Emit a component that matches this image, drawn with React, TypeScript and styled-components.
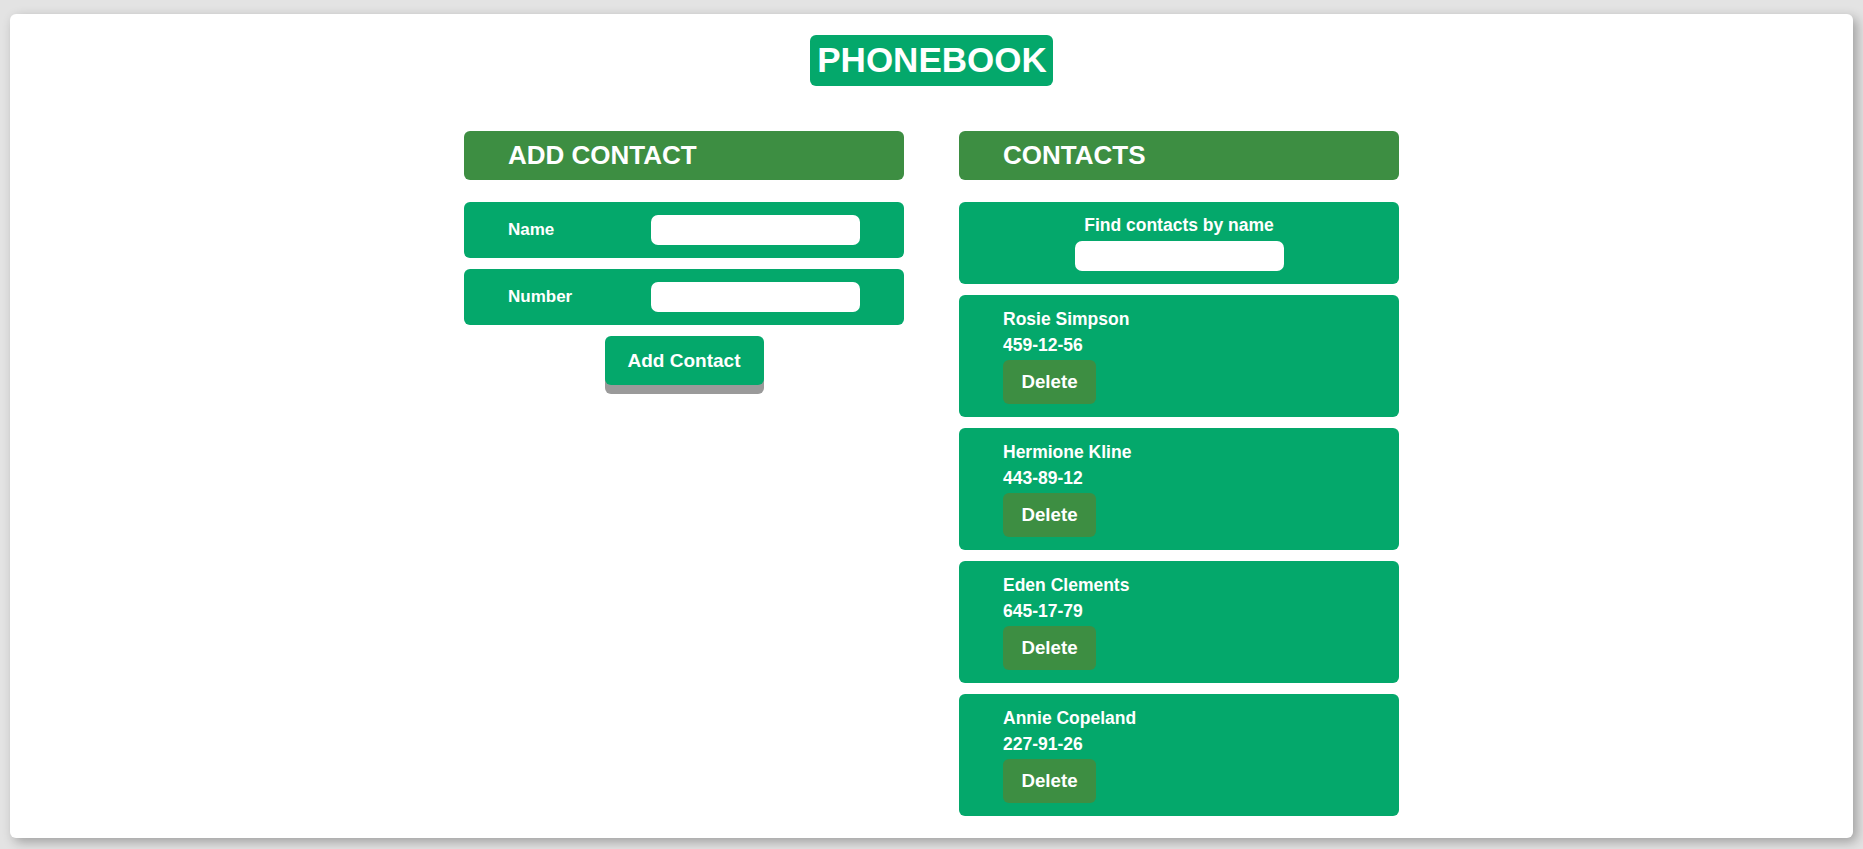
import React, { ReactElement } from "react";
import styled, { createGlobalStyle } from "styled-components";

interface Contact {
  id: string;
  name: string;
  number: string;
}

const contacts: Contact[] = [
  { id: "id-1", name: "Rosie Simpson", number: "459-12-56" },
  { id: "id-2", name: "Hermione Kline", number: "443-89-12" },
  { id: "id-3", name: "Eden Clements", number: "645-17-79" },
  { id: "id-4", name: "Annie Copeland", number: "227-91-26" },
];

const GREEN = "#04a86b";
const DARK_GREEN = "#3d8e42";

const GlobalStyle = createGlobalStyle`
  html, body {
    margin: 0;
    background-color: #e3e3e3;
    font-family: "Liberation Sans", Arial, sans-serif;
  }
  body {
    padding: 14px 10px 13px;
  }
  * {
    box-sizing: border-box;
  }
`;

const Page = styled.main`
  background-color: #fff;
  border-radius: 6px;
  box-shadow: 4px 4px 12px rgba(0, 0, 0, 0.3);
  padding: 21px 0 22px;
  display: flex;
  flex-direction: column;
  align-items: center;
`;

const Title = styled.h1`
  margin: 0 0 45px;
  padding: 5px 6px 6px 7px;
  font-size: 35px;
  line-height: 40px;
  font-weight: 700;
  color: #fff;
  background-color: ${GREEN};
  border-radius: 6px;
`;

const Columns = styled.div`
  display: grid;
  grid-template-columns: 440px 440px;
  column-gap: 55px;
  align-items: start;
`;

const Column = styled.section`
  display: flex;
  flex-direction: column;
  gap: 11px;
`;

const SectionTitle = styled.h2`
  margin: 0 0 11px;
  padding: 9px 44px 10px;
  font-size: 26px;
  line-height: 30px;
  font-weight: 700;
  color: #fff;
  background-color: ${DARK_GREEN};
  border-radius: 6px;
`;

const FieldRow = styled.label`
  display: flex;
  align-items: center;
  justify-content: space-between;
  padding: 13px 44px;
  background-color: ${GREEN};
  border-radius: 6px;
  color: #fff;
  font-size: 17px;
  font-weight: 700;
`;

const TextInput = styled.input`
  width: 209px;
  height: 30px;
  border: none;
  border-radius: 7px;
  background: #fff;
  outline: none;
  font: inherit;
`;

const SubmitButton = styled.button`
  align-self: center;
  width: 159px;
  height: 49px;
  border: none;
  border-radius: 6px;
  background-color: ${GREEN};
  box-shadow: 0 9px 0 #9a9a9a;
  color: #fff;
  font-family: inherit;
  font-size: 19px;
  font-weight: 700;
  cursor: pointer;
`;

const FilterBox = styled.label`
  display: flex;
  flex-direction: column;
  align-items: center;
  gap: 6px;
  padding: 13px 0;
  background-color: ${GREEN};
  border-radius: 6px;
  color: #fff;
  font-size: 17.5px;
  line-height: 20px;
  font-weight: 700;
`;

const ContactList = styled.ul`
  margin: 0;
  padding: 0;
  list-style: none;
  display: flex;
  flex-direction: column;
  gap: 11px;
`;

const ContactCard = styled.li`
  display: flex;
  flex-direction: column;
  align-items: flex-start;
  padding: 14px 44px 13px;
  background-color: ${GREEN};
  border-radius: 6px;
  color: #fff;
  font-size: 17.5px;
  line-height: 20px;
  font-weight: 700;
`;

const ContactText = styled.span<{ $gap: number }>`
  margin-bottom: ${(p) => p.$gap}px;
`;

const DeleteButton = styled.button`
  width: 93px;
  height: 44px;
  border: none;
  border-radius: 6px;
  background-color: ${DARK_GREEN};
  color: #fff;
  font-family: inherit;
  font-size: 18.7px;
  font-weight: 700;
  cursor: pointer;
`;

const App = (): ReactElement => {
  return (
    <>
      <GlobalStyle />
      <Page>
        <Title>PHONEBOOK</Title>
        <Columns>
          <Column as="form" onSubmit={(e: React.FormEvent) => e.preventDefault()}>
            <SectionTitle>ADD CONTACT</SectionTitle>
            <FieldRow>
              Name
              <TextInput type="text" name="name" />
            </FieldRow>
            <FieldRow>
              Number
              <TextInput type="tel" name="number" />
            </FieldRow>
            <SubmitButton type="submit">Add Contact</SubmitButton>
          </Column>

          <Column>
            <SectionTitle>CONTACTS</SectionTitle>
            <FilterBox>
              Find contacts by name
              <TextInput type="text" name="filter" />
            </FilterBox>
            <ContactList>
              {contacts.map((c) => (
                <ContactCard key={c.id}>
                  <ContactText $gap={6}>{c.name}</ContactText>
                  <ContactText $gap={5}>{c.number}</ContactText>
                  <DeleteButton type="button">Delete</DeleteButton>
                </ContactCard>
              ))}
            </ContactList>
          </Column>
        </Columns>
      </Page>
    </>
  );
};

export default App;
